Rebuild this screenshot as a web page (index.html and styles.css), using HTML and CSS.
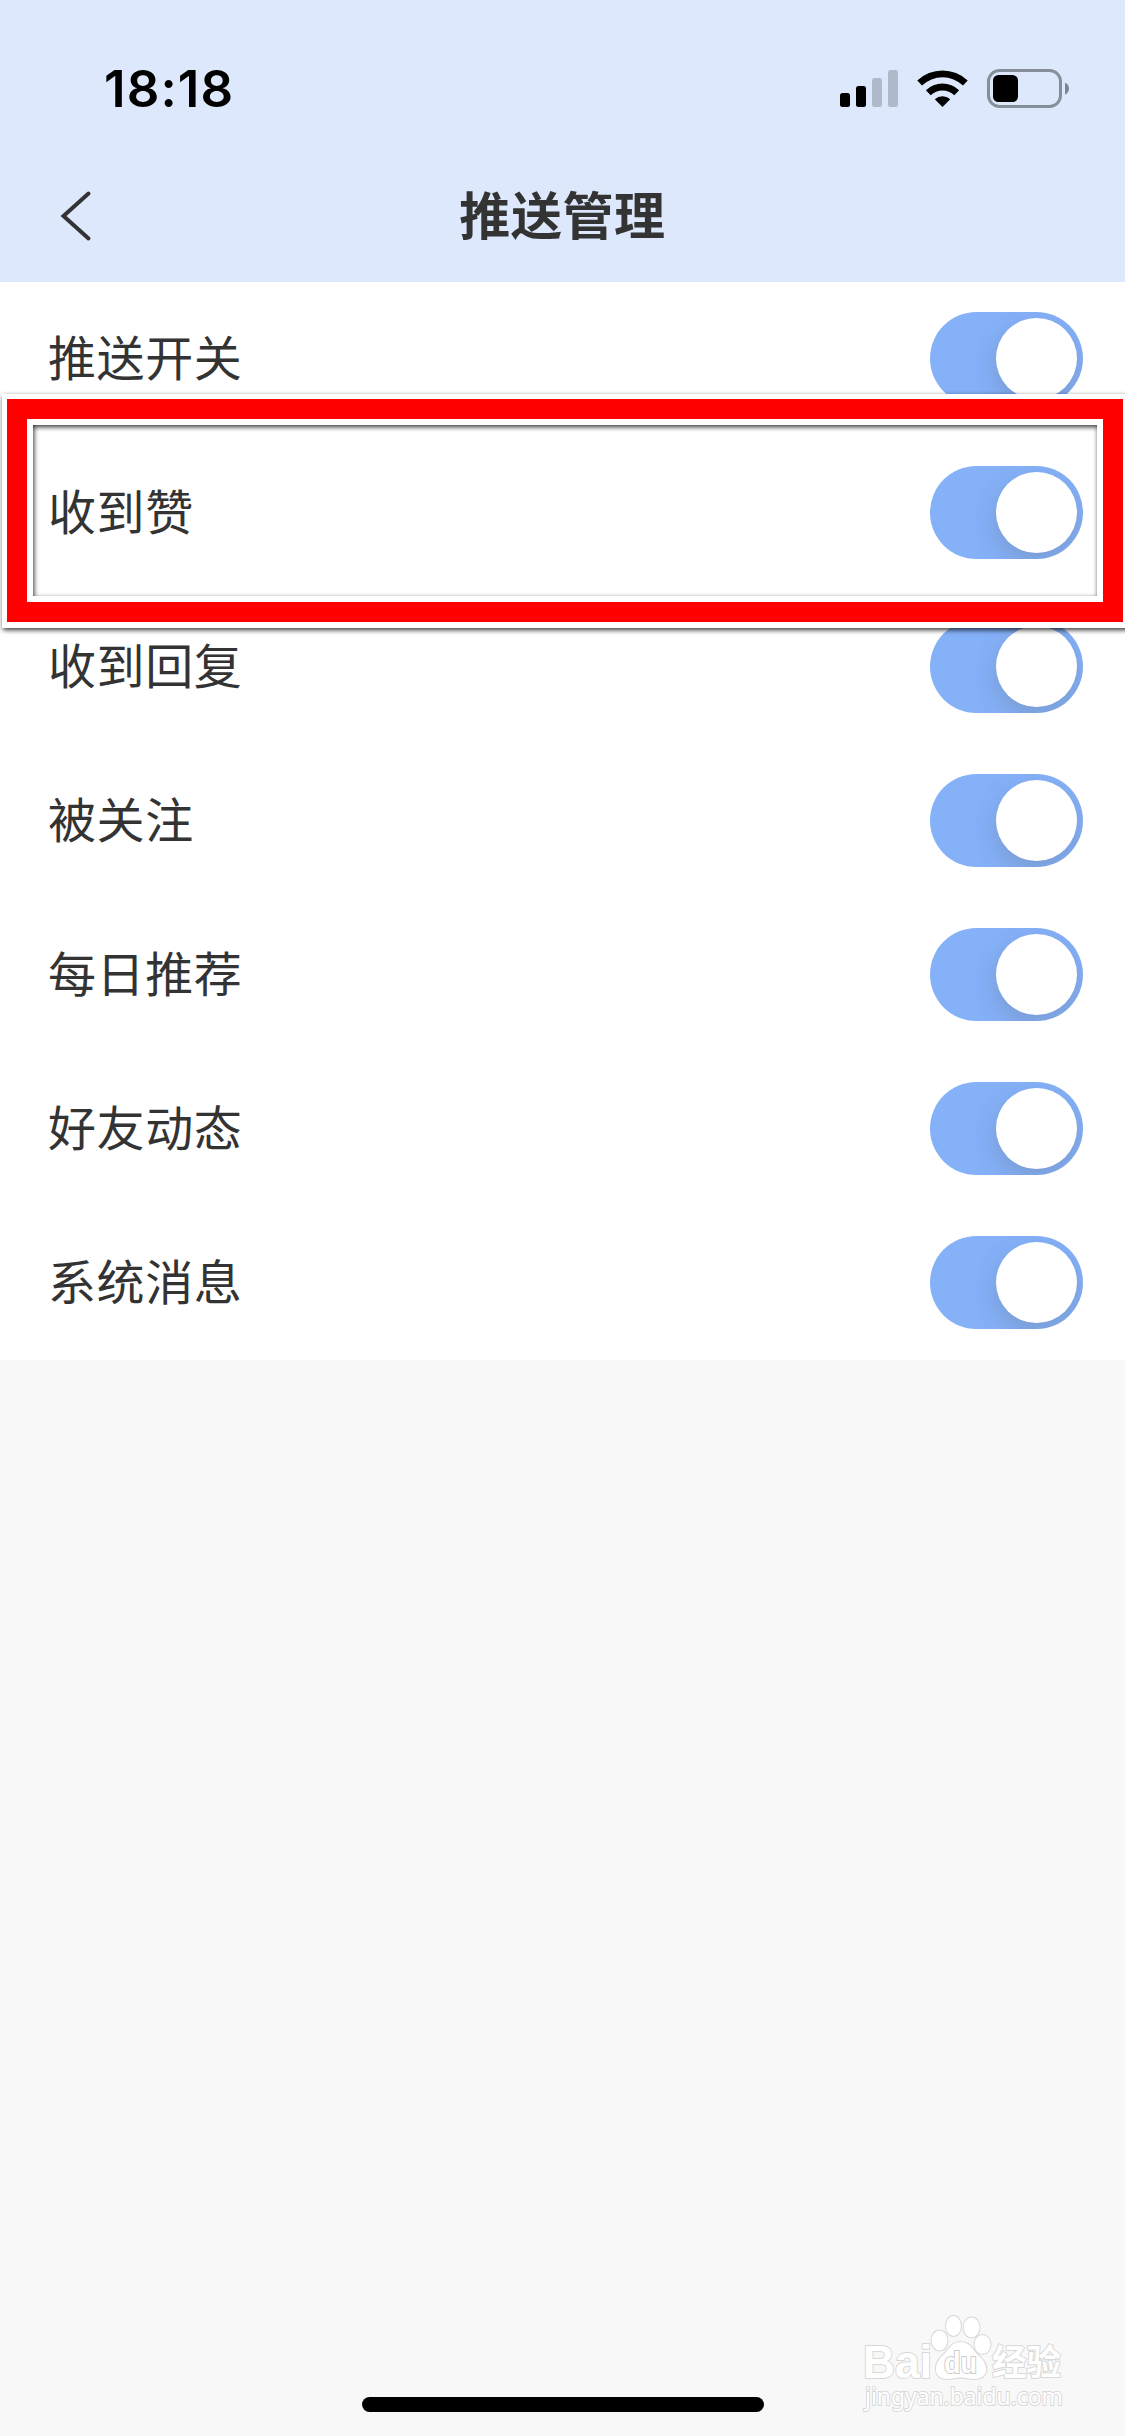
FILE: index.html
```html
<!DOCTYPE html>
<html lang="zh-CN">
<head>
<meta charset="utf-8">
<title>推送管理</title>
<link rel="stylesheet" href="styles.css">
</head>
<body>
<div class="screen">
  <header class="header">
    <div class="status">
      <span class="time">18:18</span>
      <svg class="status-icons" width="240" height="46" viewBox="0 0 240 46">
        <rect x="10" y="27" width="10" height="14" rx="2.5"/>
        <rect x="26" y="20" width="10" height="21" rx="2.5"/>
        <rect class="dim" x="42" y="12" width="10" height="29" rx="2.5"/>
        <rect class="dim" x="58" y="4" width="10" height="37" rx="2.5"/>
        <path d="M87.3 14.5A36.5 36.5 0 0 1 137.7 14.5L133 19.6A29.5 29.5 0 0 0 92 19.6Z"/>
        <path d="M95.9 24.2A24 24 0 0 1 129.1 24.2L124.3 29.2A17 17 0 0 0 100.7 29.2Z"/>
        <path d="M104.8 33.3A11.5 11.5 0 0 1 120.2 33.3L112.5 41Z"/>
        <rect class="battery" x="158.5" y="4.5" width="72" height="36" rx="11"/>
        <rect x="163" y="9" width="25" height="27" rx="5.5"/>
        <path class="battery-tip" d="M235 16.5Q239 18.5 239 22.5T235 28.7Z"/>
      </svg>
    </div>
    <nav class="nav">
      <svg class="back" width="36" height="56" viewBox="0 0 36 56"><path d="M31.5 5.500L6.500 28L31.500 50.500"/></svg>
      <h1 class="title">推送管理</h1>
    </nav>
  </header>
  <main class="list">
    <div class="row"><span class="label">推送开关</span><i class="toggle"></i></div>
    <div class="row"><span class="label">收到赞</span><i class="toggle"></i></div>
    <div class="row"><span class="label">收到回复</span><i class="toggle"></i></div>
    <div class="row"><span class="label">被关注</span><i class="toggle"></i></div>
    <div class="row"><span class="label">每日推荐</span><i class="toggle"></i></div>
    <div class="row"><span class="label">好友动态</span><i class="toggle"></i></div>
    <div class="row"><span class="label">系统消息</span><i class="toggle"></i></div>
  </main>
  <div class="marker"><div class="marker-red"><div class="marker-inner"></div></div></div>
  <svg class="watermark" width="230" height="124" viewBox="0 0 230 124">
    <g class="mark">
      <text class="bai" x="10" y="78" textLength="69" lengthAdjust="spacingAndGlyphs">Bai</text>
      <ellipse cx="86.5" cy="40.5" rx="8" ry="10"/>
      <ellipse cx="100.500" cy="26" rx="7.5" ry="10"/>
      <ellipse cx="118.5" cy="27.5" rx="8" ry="10"/>
      <ellipse cx="129.5" cy="44.5" rx="8" ry="9.5"/>
      <path d="M107.500 42C98 42 96 50 89 56C80 65 80 79 95 79C101 79 103 77.500 108 77.500C113 77.500 115 79 121 79C136 79 136 66 128 58C119 50 118 42 107.500 42Z"/>
      <text class="du" x="91" y="73" textLength="33" lengthAdjust="spacingAndGlyphs">du</text>
      <text class="jy" x="139" y="75" textLength="69" lengthAdjust="spacingAndGlyphs">经验</text>
      <text class="url" x="12" y="105" textLength="198" lengthAdjust="spacingAndGlyphs">jingyan.baidu.com</text>
    </g>
  </svg>
  <div class="home-bar"></div>
</div>
</body>
</html>
```
FILE: styles.css
```css
* { box-sizing: border-box; }
body { margin: 0; background: #f8f8f8; }
.screen {
  position: relative;
  display: flex;
  flex-direction: column;
  width: 1125px;
  height: 2436px;
  overflow: hidden;
  background: #f8f8f8;
  color: #333;
  font-family: "Noto Sans CJK SC", sans-serif;
}
.header { height: 282px; background: #dde8fc; }
.status {
  display: flex;
  justify-content: space-between;
  align-items: flex-start;
  height: 150px;
  padding: 66px 55px 0 104px;
}
.time {
  color: #000;
  font: 600 51px/46px Inter, sans-serif;
  letter-spacing: 1.1px;
}
.status-icons .dim { fill: #b0bacb; }
.status-icons .battery { fill: none; stroke: #868e99; stroke-width: 3; }
.status-icons .battery-tip { fill: #7d8490; }
.nav {
  display: grid;
  grid-template-columns: 120px 1fr 120px;
  align-items: center;
  height: 132px;
}
.back { margin-left: 57px; }
.back path { fill: none; stroke: #333; stroke-width: 4; stroke-linecap: round; stroke-linejoin: miter; }
.title {
  margin: 0;
  padding-bottom: 7px;
  text-align: center;
  font-size: 51px;
  line-height: 72px;
  font-weight: 700;
  letter-spacing: 0.6px;
}
.list { height: 1078px; background: #fff; }
.row {
  display: flex;
  align-items: center;
  justify-content: space-between;
  height: 154px;
  padding: 0 42px 1px 48px;
  font-size: 48px;
  line-height: 70px;
  letter-spacing: 0.6px;
}
.label { padding-bottom: 8px; }
.toggle {
  display: flex;
  justify-content: flex-end;
  width: 153px;
  height: 93px;
  padding: 6px;
  overflow: hidden;
  border-radius: 47px;
  background: #85b1f9;
}
.toggle::before {
  content: "";
  width: 81px;
  height: 81px;
  border-radius: 50%;
  background: #fff;
  box-shadow: 0 9px 24px rgba(80, 80, 80, 0.24);
}
.marker {
  position: absolute;
  left: 2px;
  top: 394px;
  width: 1127px;
  height: 234px;
  border: solid #fff;
  border-width: 5px 6px 6px 5px;
  filter: drop-shadow(1px 2px 2.5px rgba(0, 0, 0, 0.8));
}
.marker-red { height: 100%; border: 20px solid #f00; }
.marker-inner { height: 100%; border: 6px solid #fff; }
.watermark { position: absolute; left: 853px; top: 2300px; }
.mark { fill: #fff; stroke: #d8d8d8; stroke-width: 2; paint-order: stroke; }
.bai { font: 700 46px "Liberation Sans", sans-serif; }
.du { font: 700 29px "Liberation Sans", sans-serif; stroke: #ccc; }
.jy { font: 700 35px "Noto Sans CJK SC", sans-serif; }
.url { font: 400 24px "Noto Sans", sans-serif; }
.home-bar {
  width: 402px;
  height: 15px;
  margin: auto auto 24px 362px;
  border-radius: 8px;
  background: #000;
}
```
